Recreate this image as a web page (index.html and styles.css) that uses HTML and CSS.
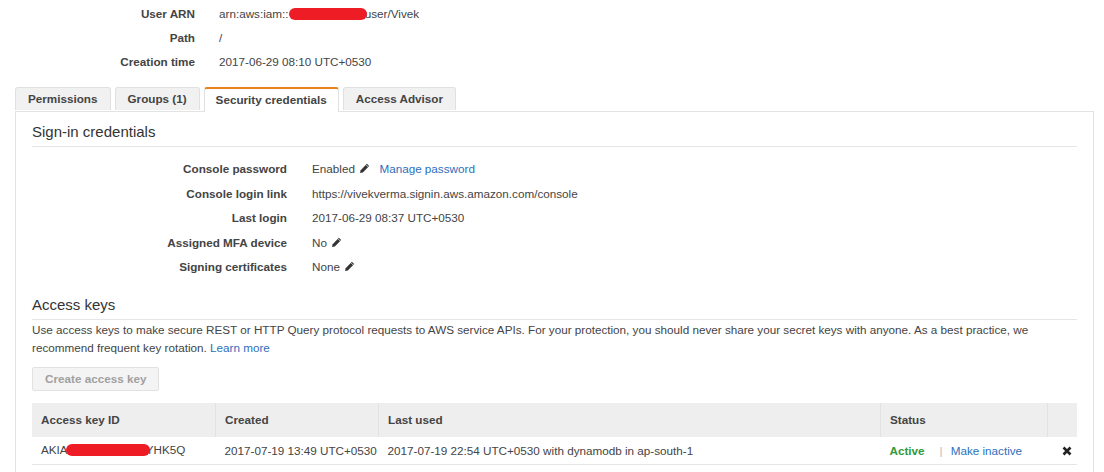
FILE: index.html
```html
<!DOCTYPE html>
<html>
<head>
<meta charset="utf-8">
<link rel="stylesheet" href="styles.css">
</head>
<body>
<div class="summary">
  <div class="lbl">User ARN</div>
  <div class="val">arn:aws:iam::<span class="redact redact-arn"></span>:user/Vivek</div>
  <div class="lbl">Path</div>
  <div class="val">/</div>
  <div class="lbl">Creation time</div>
  <div class="val">2017-06-29 08:10 UTC+0530</div>
</div>

<div class="tabs">
  <div class="tab">Permissions</div>
  <div class="tab">Groups (1)</div>
  <div class="tab tab-current">Security credentials</div>
  <div class="tab">Access Advisor</div>
</div>

<div class="panel">
  <h2 class="section-title">Sign-in credentials</h2>
  <div class="creds">
    <div class="lbl">Console password</div>
    <div class="val">Enabled <svg class="pencil" viewBox="0 0 12 12"><path d="M8.6 0.9 L11.1 3.4 L4.2 10.3 L1.1 11 L1.8 7.8 Z" fill="#333"/><path d="M7.6 1.9 L10.1 4.4" stroke="#fff" stroke-width="0.8"/></svg> <a class="link" href="#">Manage password</a></div>
    <div class="lbl">Console login link</div>
    <div class="val">https://vivekverma.signin.aws.amazon.com/console</div>
    <div class="lbl">Last login</div>
    <div class="val">2017-06-29 08:37 UTC+0530</div>
    <div class="lbl">Assigned MFA device</div>
    <div class="val">No <svg class="pencil" viewBox="0 0 12 12"><path d="M8.6 0.9 L11.1 3.4 L4.2 10.3 L1.1 11 L1.8 7.8 Z" fill="#333"/><path d="M7.6 1.9 L10.1 4.4" stroke="#fff" stroke-width="0.8"/></svg></div>
    <div class="lbl">Signing certificates</div>
    <div class="val">None <svg class="pencil" viewBox="0 0 12 12"><path d="M8.6 0.9 L11.1 3.4 L4.2 10.3 L1.1 11 L1.8 7.8 Z" fill="#333"/><path d="M7.6 1.9 L10.1 4.4" stroke="#fff" stroke-width="0.8"/></svg></div>
  </div>

  <h2 class="section-title keys-title">Access keys</h2>
  <p class="desc">Use access keys to make secure REST or HTTP Query protocol requests to AWS service APIs. For your protection, you should never share your secret keys with anyone. As a best practice, we recommend frequent key rotation. <a class="link" href="#">Learn more</a></p>

  <button class="btn" disabled>Create access key</button>

  <table class="keys">
    <thead>
      <tr>
        <th class="c1">Access key ID</th>
        <th class="c2">Created</th>
        <th class="c3">Last used</th>
        <th class="c4">Status</th>
        <th class="c5"></th>
      </tr>
    </thead>
    <tbody>
      <tr>
        <td>AKIA<span class="redact redact-key"></span>YHK5Q</td>
        <td>2017-07-19 13:49 UTC+0530</td>
        <td>2017-07-19 22:54 UTC+0530 with dynamodb in ap-south-1</td>
        <td><span class="status-active">Active</span><span class="sep">|</span><a class="link" href="#">Make inactive</a></td>
        <td class="del"><svg viewBox="0 0 10 10" width="10" height="10"><path d="M1.5 1.5 L8.5 8.5 M8.5 1.5 L1.5 8.5" stroke="#222" stroke-width="2.6" stroke-linecap="butt"/></svg></td>
      </tr>
    </tbody>
  </table>
</div>
</body>
</html>
```

FILE: styles.css
```css
html, body {
  margin: 0;
  padding: 0;
  background: #fff;
}
body {
  font-family: "Liberation Sans", Arial, sans-serif;
  font-size: 11.7px;
  color: #444;
}
.summary {
  display: grid;
  grid-template-columns: 195px auto;
  column-gap: 24px;
  padding-top: 2px;
  line-height: 24px;
}
.lbl {
  text-align: right;
  font-weight: bold;
  color: #444;
}
.val {
  color: #444;
}
.redact {
  display: inline-block;
  background: #ee1c25;
  border-radius: 7px;
  vertical-align: middle;
}
.redact-arn {
  width: 78px;
  height: 12px;
  margin: 0 -5px 0 0;
  position: relative;
  top: -1px;
}
.redact-key {
  width: 84px;
  height: 12px;
  margin: 0 -4px 0 -2px;
  position: relative;
  top: -1px;
}
.tabs {
  display: flex;
  gap: 4px;
  margin: 13px 0 0 15px;
  position: relative;
  z-index: 1;
}
.tab {
  height: 22px;
  line-height: 22px;
  padding: 0 12px;
  background: #f1f1f1;
  border: 1px solid #e0e0e0;
  border-bottom: none;
  border-radius: 3px 3px 0 0;
  font-weight: bold;
  color: #444;
}
.tab.tab-current {
  background: #fff;
  border-top: 2px solid #e8821e;
  height: 22px;
  padding: 0 11px 1px 11px;
  margin-bottom: -1px;
  line-height: 21px;
}
.panel {
  margin: 0 10px 0 15px;
  border: 1px solid #e3e3e3;
  border-bottom: none;
  padding: 0 16px 20px 16px;
  min-height: 400px;
}
.section-title {
  margin: 0;
  font-size: 15px;
  font-weight: normal;
  color: #333;
  padding: 11px 0 6px 0;
  border-bottom: 1px solid #e6e6e6;
}
.creds {
  display: grid;
  grid-template-columns: 255px auto;
  column-gap: 25px;
  line-height: 24.5px;
  padding-top: 10px;
}
.pencil {
  width: 11px;
  height: 11px;
  vertical-align: -1px;
  margin-left: 1px;
}
.link {
  color: #2d6fbc;
  text-decoration: none;
}
.creds .link {
  margin-left: 6px;
}
.keys-title {
  padding-top: 16px;
}
.desc {
  margin: 0;
  padding-top: 1px;
  line-height: 18px;
}
.btn {
  display: block;
  margin-top: 10px;
  height: 24px;
  padding: 0 12px;
  background: #f4f4f4;
  border: 1px solid #e2e2e2;
  border-radius: 2px;
  font-family: "Liberation Sans", Arial, sans-serif;
  font-size: 11.7px;
  font-weight: bold;
  color: #a0a0a0;
}
.keys {
  margin-top: 12px;
  width: 1045px;
  border-collapse: collapse;
}
.keys th {
  background: #eeeeee;
  height: 34px;
  text-align: left;
  font-weight: bold;
  color: #444;
  padding: 0 0 0 9px;
  border-left: 1px solid #e2e2e2;
  border-right: 1px solid #e2e2e2;
}
.keys th.c1 { width: 174px; border-left: none; }
.keys th.c2 { width: 153px; }
.keys th.c3 { width: 492px; }
.keys th.c4 { width: 157px; }
.keys th.c5 { border-right: none; }
.keys td {
  height: 27px;
  padding: 0 0 0 9px;
  color: #444;
  border-bottom: 1px solid #e6e6e6;
  white-space: nowrap;
}
.status-active {
  color: #2e9a3a;
  font-weight: bold;
}
.sep {
  color: #bbb;
  margin: 0 8px 0 15px;
}
.del {
  text-align: center;
}
.del svg {
  vertical-align: middle;
}
```
